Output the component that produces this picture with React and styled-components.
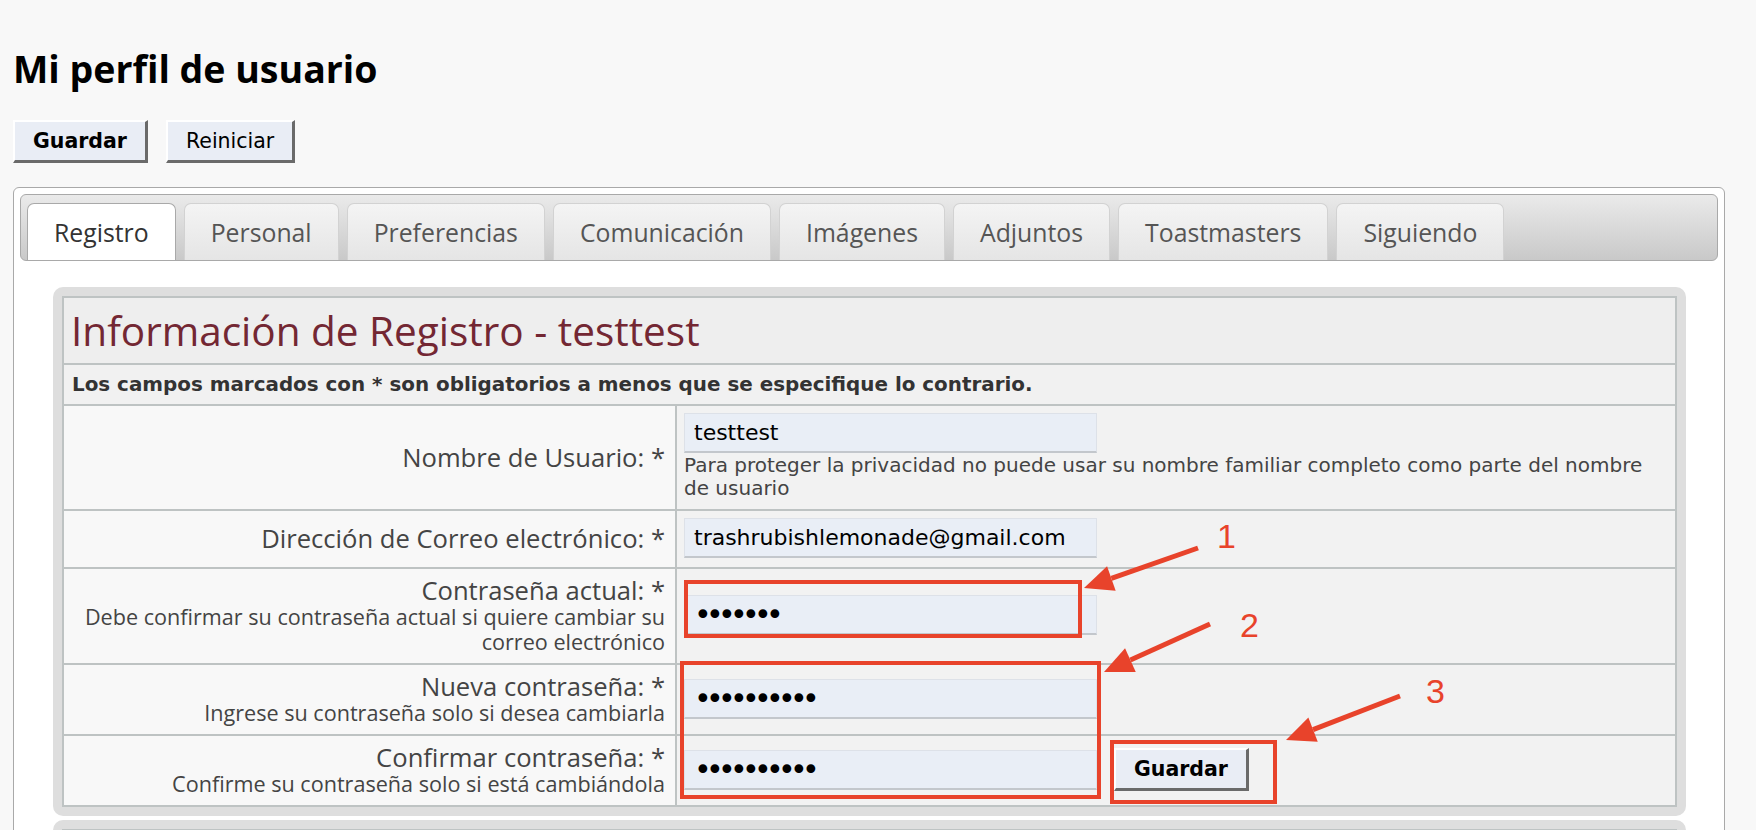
import React from 'react';
import styled, { createGlobalStyle } from 'styled-components';

const GlobalStyle = createGlobalStyle`
  html, body {
    margin: 0;
    padding: 0;
    background: #f8f8f8;
    overflow: hidden;
  }
  body {
    font-family: "Open Sans", "DejaVu Sans", sans-serif;
  }
`;

const Page = styled.div`
  position: relative;
  height: 830px;
  padding: 0 31px 0 13px;
  overflow: hidden;
`;

const Title = styled.h1`
  margin: 0;
  padding-top: 47px;
  font: 700 37.5px/44px "Open Sans", sans-serif;
  color: #000;
`;

const Toolbar = styled.div`
  display: flex;
  gap: 18px;
  margin-top: 29px;
`;

const Button = styled.button`
  height: 43px;
  box-sizing: border-box;
  padding: 0 18px;
  background: #e9edf5;
  border-style: solid;
  border-width: 2px 3px 3px 2px;
  border-color: #fff #6a6a6a #6a6a6a #fff;
  font-family: "DejaVu Sans", sans-serif;
  font-size: 20.5px;
  font-weight: ${({ $primary }) => ($primary ? 700 : 400)};
  color: #000;
  cursor: pointer;
`;

const Frame = styled.div`
  margin-top: 24px;
  min-height: 760px;
  padding: 6px;
  background: #fff;
  border: 1px solid #a9a9a9;
  border-radius: 6px;
`;

const TabBar = styled.div`
  display: flex;
  align-items: flex-end;
  gap: 8px;
  height: 67px;
  box-sizing: border-box;
  padding: 8px 6px 0;
  border: 1px solid #a9a9a9;
  border-radius: 6px;
  background: linear-gradient(#eaeaea, #c9c9c9);
`;

const Tab = styled.div`
  height: 57px;
  box-sizing: border-box;
  padding: 0 26px;
  border: 1px solid ${({ $active }) => ($active ? '#a9a9a9' : '#d2d2d2')};
  border-bottom: 0;
  border-radius: 7px 7px 0 0;
  background: ${({ $active }) =>
    $active ? '#fff' : 'linear-gradient(#f4f4f4, #e5e5e5)'};
  color: ${({ $active }) => ($active ? '#333' : '#555')};
  font: 400 24.8px/56px "Open Sans", sans-serif;
  white-space: nowrap;
`;

const Panel = styled.div`
  margin: ${({ $first }) => ($first ? '26px' : '4px')} 32px 0 33px;
  padding: 9px;
  background: #dedede;
  border-radius: 10px;
`;

const Table = styled.div`
  border: 2px solid #bec3c3;
  background: #f8f8f8;
`;

const Heading = styled.div`
  padding: 10px 7px;
  background: #eeeeee;
  color: #732733;
  font: 400 40.5px/45px "Open Sans", sans-serif;
  min-height: ${({ $empty }) => ($empty ? '45px' : 'auto')};
`;

const Notice = styled.div`
  padding: 8px;
  border-top: 2px solid #bec3c3;
  background: #f1f1f1;
  color: #333;
  font: 700 19.9px/23px "DejaVu Sans", sans-serif;
`;

const Row = styled.div`
  display: grid;
  grid-template-columns: 613px 1fr;
  border-top: 2px solid #bec3c3;
`;

const LabelCell = styled.div`
  display: flex;
  flex-direction: column;
  justify-content: center;
  padding: 9px 10px;
  background: #f8f8f8;
  border-right: 2px solid #bec3c3;
  text-align: right;
  color: #444;
`;

const LabelMain = styled.div`
  font: 400 25.6px/26px "Open Sans", sans-serif;
`;

const LabelHint = styled.div`
  font: 400 21.6px/25px "Open Sans", sans-serif;
`;

const ValueCell = styled.div`
  display: flex;
  flex-direction: ${({ $inline }) => ($inline ? 'row' : 'column')};
  justify-content: ${({ $inline }) => ($inline ? 'flex-start' : 'center')};
  align-items: ${({ $inline }) => ($inline ? 'center' : 'flex-start')};
  gap: ${({ $inline }) => ($inline ? '17px' : '1px')};
  padding: 7px 8px 9px 7px;
  background: #f2f2f2;
`;

// password masks use a bigger bullet, packed tighter, like the original
const Field = styled.input`
  width: 413px;
  height: 40px;
  box-sizing: border-box;
  padding: 0 9px;
  margin: 0;
  background: #e9eef6;
  border: 1px solid #dde1e8;
  border-bottom: 2px solid #c3c7cc;
  color: #000;
  font: 400 ${({ type }) => (type === 'password' ? '30px' : '22px')} "DejaVu Sans", sans-serif;
  letter-spacing: ${({ type }) => (type === 'password' ? '-5.7px' : 'normal')};
  outline: none;
`;

const Hint = styled.div`
  color: #444;
  font: 400 20px/23px "DejaVu Sans", sans-serif;
`;

const Annotations = styled.svg`
  position: absolute;
  top: 0;
  left: 0;
  pointer-events: none;
`;

const RED = '#e8432b';

const tabs = [
  'Registro',
  'Personal',
  'Preferencias',
  'Comunicación',
  'Imágenes',
  'Adjuntos',
  'Toastmasters',
  'Siguiendo',
];

// straight arrow with a filled triangular head, tail -> tip
const Arrow = ({ from, to }) => {
  const dx = to[0] - from[0];
  const dy = to[1] - from[1];
  const len = Math.hypot(dx, dy);
  const ux = dx / len;
  const uy = dy / len;
  const bx = to[0] - ux * 29;
  const by = to[1] - uy * 29;
  const nx = -uy * 13;
  const ny = ux * 13;
  return (
    <g>
      <line x1={from[0]} y1={from[1]} x2={bx} y2={by} stroke={RED} strokeWidth="5" />
      <polygon
        points={`${to[0]},${to[1]} ${bx + nx},${by + ny} ${bx - nx},${by - ny}`}
        fill={RED}
      />
    </g>
  );
};

const App = () => {
  return (
    <Page>
      <GlobalStyle />
      <Title>Mi perfil de usuario</Title>
      <Toolbar>
        <Button $primary>Guardar</Button>
        <Button>Reiniciar</Button>
      </Toolbar>

      <Frame>
        <TabBar>
          {tabs.map((t, i) => (
            <Tab key={t} $active={i === 0}>
              {t}
            </Tab>
          ))}
        </TabBar>

        <Panel $first>
          <Table>
            <Heading>Información de Registro - testtest</Heading>
            <Notice>
              Los campos marcados con * son obligatorios a menos que se especifique lo contrario.
            </Notice>

            <Row>
              <LabelCell>
                <LabelMain>Nombre de Usuario: *</LabelMain>
              </LabelCell>
              <ValueCell>
                <Field type="text" defaultValue="testtest" readOnly />
                <Hint>
                  Para proteger la privacidad no puede usar su nombre familiar completo como parte
                  del nombre de usuario
                </Hint>
              </ValueCell>
            </Row>

            <Row>
              <LabelCell>
                <LabelMain>Dirección de Correo electrónico: *</LabelMain>
              </LabelCell>
              <ValueCell>
                <Field type="text" defaultValue="trashrubishlemonade@gmail.com" readOnly />
              </ValueCell>
            </Row>

            <Row>
              <LabelCell>
                <LabelMain>Contraseña actual: *</LabelMain>
                <LabelHint>
                  Debe confirmar su contraseña actual si quiere cambiar su correo electrónico
                </LabelHint>
              </LabelCell>
              <ValueCell>
                <Field type="password" defaultValue="1234567" readOnly />
              </ValueCell>
            </Row>

            <Row>
              <LabelCell>
                <LabelMain>Nueva contraseña: *</LabelMain>
                <LabelHint>Ingrese su contraseña solo si desea cambiarla</LabelHint>
              </LabelCell>
              <ValueCell>
                <Field type="password" defaultValue="1234567890" readOnly />
              </ValueCell>
            </Row>

            <Row>
              <LabelCell>
                <LabelMain>Confirmar contraseña: *</LabelMain>
                <LabelHint>Confirme su contraseña solo si está cambiándola</LabelHint>
              </LabelCell>
              <ValueCell $inline>
                <Field type="password" defaultValue="1234567890" readOnly />
                <Button $primary>Guardar</Button>
              </ValueCell>
            </Row>
          </Table>
        </Panel>

        <Panel>
          <Table>
            <Heading $empty />
          </Table>
        </Panel>
      </Frame>

      <Annotations width="1756" height="830" viewBox="0 0 1756 830">
        <rect x="686" y="582" width="394" height="54" fill="none" stroke={RED} strokeWidth="4" />
        <rect x="682" y="663" width="417" height="134" fill="none" stroke={RED} strokeWidth="4" />
        <rect x="1112" y="742" width="163" height="60" fill="none" stroke={RED} strokeWidth="4" />
        <Arrow from={[1198, 548]} to={[1084, 588]} />
        <Arrow from={[1210, 624]} to={[1104, 672]} />
        <Arrow from={[1400, 696]} to={[1286, 740]} />
        <g fill={RED} fontFamily='"Liberation Sans", Arial, sans-serif' fontSize="34">
          <text x="1217" y="548">1</text>
          <text x="1240" y="637">2</text>
          <text x="1426" y="703">3</text>
        </g>
      </Annotations>
    </Page>
  );
};

export default App;
